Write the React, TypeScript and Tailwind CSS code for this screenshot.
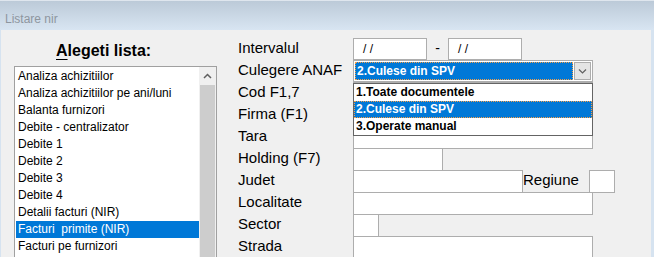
import React from "react";

const items = [
  "Analiza achizitiilor",
  "Analiza achizitiilor pe ani/luni",
  "Balanta furnizori",
  "Debite - centralizator",
  "Debite 1",
  "Debite 2",
  "Debite 3",
  "Debite 4",
  "Detalii facturi (NIR)",
  "Facturi  primite (NIR)",
  "Facturi pe furnizori",
];

function Label({ children }: { children: React.ReactNode }) {
  return (
    <div className="w-[115px] shrink-0 text-[15px] leading-[22px] font-normal text-black -mt-[2px]">
      {children}
    </div>
  );
}

export default function App() {
  return (
    <div className="w-[654px] h-[257px] overflow-hidden flex flex-col bg-[#d6e3f0] font-['Liberation_Sans',Arial,sans-serif]">
      <div className="h-[30px] shrink-0 bg-gradient-to-b from-[#bccad8] to-[#d8e5f2] border-t border-[#dfe6ee] flex items-end pb-[4px] pl-[5px] text-[12px] leading-[14px] text-[#8e969f]">
        Listare nir
      </div>
      <div className="flex-1 min-h-0 ml-[1px] mr-[3px] bg-[#f0f0f0] flex">
        {/* left column */}
        <div className="w-[229px] shrink-0 flex flex-col min-h-0">
          <div className="mt-[12px] pl-[55px] h-[18px] leading-[18px] text-[16px] font-bold text-black">
            <span className="underline underline-offset-[3px]">A</span>legeti lista:
          </div>
          <div className="mt-[6px] ml-[13px] w-[203px] flex-1 min-h-[200px] border border-[#a0a0a0] bg-white flex">
            <div className="w-[184px] pt-[1px] pl-[1px] overflow-hidden">
              {items.map((it, i) => (
                <div
                  key={i}
                  className={
                    i === 9
                      ? "h-[17px] leading-[17px] text-[12px] pl-[2px] whitespace-pre bg-[#0078d7] text-white"
                      : "h-[17px] leading-[17px] text-[12px] pl-[2px] whitespace-pre text-black"
                  }
                >
                  {it}
                </div>
              ))}
            </div>
            <div className="w-[17px] bg-[#f0f0f0] flex flex-col">
              <div className="h-[18px] flex items-center justify-center">
                <svg width="9" height="6" viewBox="0 0 9 6">
                  <path d="M1 5 L4.5 1.5 L8 5" fill="none" stroke="#606060" strokeWidth="1.5" />
                </svg>
              </div>
              <div className="mx-[1px] flex-1 bg-[#cdcdcd]" />
            </div>
          </div>
        </div>

        {/* right column */}
        <div className="flex-1 pt-[8px] pl-[8px] flex flex-col">
          {/* Intervalul */}
          <div className="h-[22px] flex items-start">
            <div className="h-[22px] flex items-center"><Label>Intervalul</Label></div>
            <div className="w-[74px] h-[22px] border border-[#adadad] bg-white text-[12px] leading-[20px] pl-[9px] text-black">/ /</div>
            <div className="w-[21px] h-[22px] text-[14px] leading-[20px] text-center text-black">-</div>
            <div className="w-[74px] h-[22px] border border-[#adadad] bg-white text-[12px] leading-[20px] pl-[9px] text-black">/ /</div>
          </div>
          {/* Culegere ANAF */}
          <div className="h-[22px] flex items-start relative">
            <div className="h-[22px] flex items-center"><Label>Culegere ANAF</Label></div>
            <div className="relative w-[240px] h-[22px] border border-[#adadad] bg-white p-[1px] flex gap-[1px]">
              <div className="flex-1 bg-[#0078d7] outline outline-1 outline-dotted outline-[#f5a04a] -outline-offset-1 text-white font-bold text-[12px] leading-[18px] pl-[2px]">
                2.Culese din SPV
              </div>
              <div className="w-[17px] bg-[#e5e5e5] border border-[#adadad] flex items-center justify-center">
                <svg width="9" height="6" viewBox="0 0 9 6">
                  <path d="M1 1.5 L4.5 5 L8 1.5" fill="none" stroke="#606060" strokeWidth="1.2" />
                </svg>
              </div>
              <div className="absolute left-[-1px] top-[22px] w-[240px] border border-[#646464] bg-white z-10">
                <div className="h-[17px] leading-[17px] text-[12px] font-bold pl-[2px] text-black">1.Toate documentele</div>
                <div className="h-[17px] leading-[15px] text-[12px] font-bold pl-[1px] text-white bg-[#0078d7] border border-dotted border-[#f5a04a]">2.Culese din SPV</div>
                <div className="h-[17px] leading-[17px] text-[12px] font-bold pl-[2px] text-black">3.Operate manual</div>
              </div>
            </div>
          </div>
          {/* Cod F1,7 */}
          <div className="h-[22px] flex items-start">
            <div className="h-[22px] flex items-center"><Label>Cod F1,7</Label></div>
            <div className="w-[240px] h-[23px] border border-[#adadad] bg-white" />
          </div>
          {/* Firma */}
          <div className="h-[22px] flex items-start">
            <div className="h-[22px] flex items-center"><Label>Firma (F1)</Label></div>
            <div className="w-[240px] h-[23px] border border-[#adadad] bg-white" />
          </div>
          {/* Tara */}
          <div className="h-[22px] flex items-start">
            <div className="h-[22px] flex items-center"><Label>Tara</Label></div>
            <div className="w-[240px] h-[23px] border border-[#adadad] bg-white" />
          </div>
          {/* Holding */}
          <div className="h-[22px] flex items-start">
            <div className="h-[22px] flex items-center"><Label>Holding (F7)</Label></div>
            <div className="w-[90px] h-[23px] border border-[#adadad] bg-white" />
          </div>
          {/* Judet */}
          <div className="h-[22px] flex items-start">
            <div className="h-[22px] flex items-center"><Label>Judet</Label></div>
            <div className="w-[170px] h-[23px] border border-[#adadad] bg-white" />
            <div className="h-[22px] w-[66px] flex items-center text-[15px] text-black -mt-[1px]">Regiune</div>
            <div className="w-[26px] h-[23px] border border-[#adadad] bg-white" />
          </div>
          {/* Localitate */}
          <div className="h-[22px] flex items-start">
            <div className="h-[22px] flex items-center"><Label>Localitate</Label></div>
            <div className="w-[240px] h-[23px] border border-[#adadad] bg-white" />
          </div>
          {/* Sector */}
          <div className="h-[22px] flex items-start">
            <div className="h-[22px] flex items-center"><Label>Sector</Label></div>
            <div className="w-[26px] h-[23px] border border-[#adadad] bg-white" />
          </div>
          {/* Strada */}
          <div className="h-[22px] flex items-start">
            <div className="h-[22px] flex items-center"><Label>Strada</Label></div>
            <div className="w-[240px] h-[23px] border border-[#adadad] bg-white" />
          </div>
        </div>
      </div>
    </div>
  );
}
